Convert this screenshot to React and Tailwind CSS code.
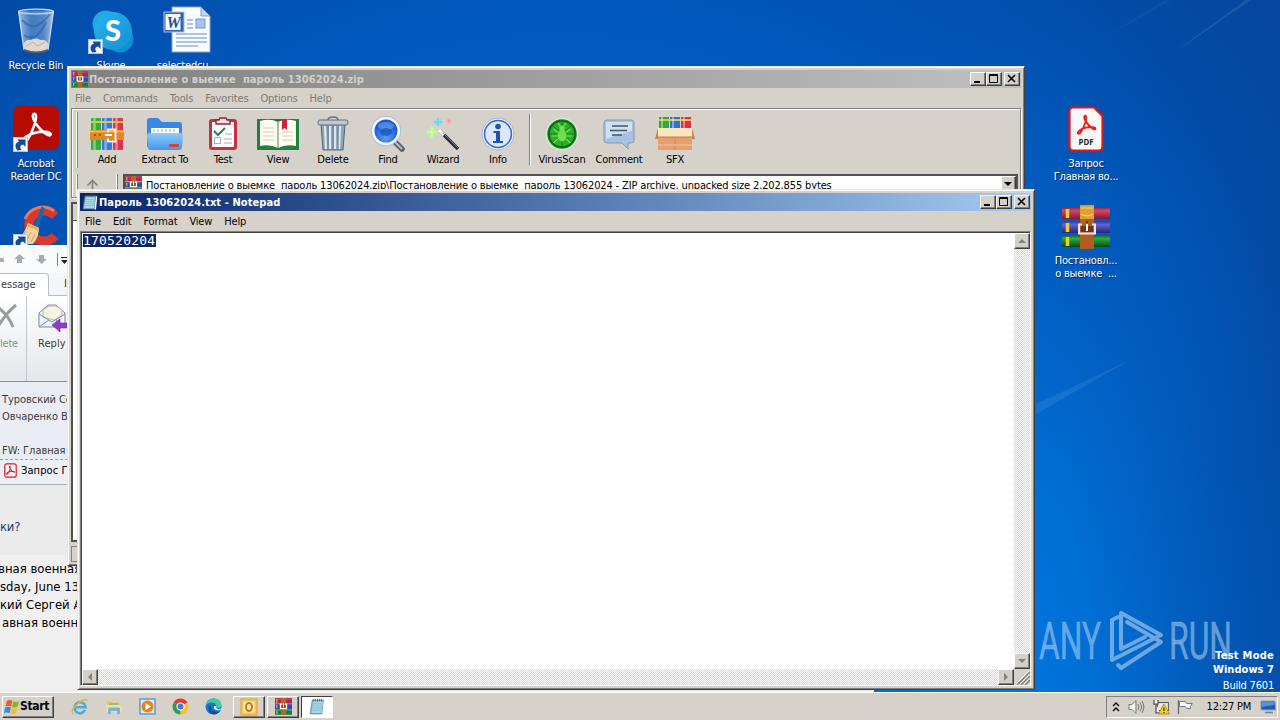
import React from 'react';

// Stack of books with a belt, used at several sizes
const BooksIcon = ({ size = 16, className = '' }) => (
  <svg width={size} height={size} viewBox="0 0 16 16" className={className}>
    <rect x="0" y="0" width="16" height="5" fill="#b5274a" />
    <rect x="0" y="5.3" width="16" height="5" fill="#3a42b8" />
    <rect x="0" y="10.6" width="16" height="5.2" fill="#17803c" />
    <path d="M0 1h16M0 6.4h16M0 11.6h16" stroke="#fff" strokeOpacity=".2" />
    <path d="M1.700 1v3.500M1.700 6.500v3M1.700 12v3" stroke="#e8c53a" strokeWidth="1" />
    <rect x="5.600" y="0" width="4.800" height="16" fill="#b06a24" />
    <path d="M5.200 10.200V5.800h1.500M10.800 10.200V5.800H9.300M5.200 10h5.600" fill="none" stroke="#fff" strokeWidth="1.300" />
    <rect x="6.200" y="6.500" width="3.600" height="2.800" fill="#7b3514" />
    <path d="M8 5v4" stroke="#fff" strokeWidth="1.100" />
  </svg>
);

const NotepadIcon = ({ size = 16 }) => (
  <svg width={size} height={size} viewBox="0 0 16 16">
    <path d="M3 2h11l-1.500 13H1z" fill="#7ab3c8" stroke="#4f8090" strokeWidth=".6" />
    <path d="M3.800 3h9.400l-1.400 11H2.200z" fill="#a9d6e3" />
    <path d="M3.500 5.500h9M3.200 7.500h9M3 9.500h9M2.800 11.500h9" stroke="#82b5c8" strokeWidth=".6" />
    <path d="M4 .8v2.400M6 .8v2.400M8 .8v2.400M10 .8v2.400M12 .8v2.400" stroke="#555" strokeWidth=".8" />
    <path d="M14 2l1.300.6L14 15.400h-1.500z" fill="#fff" />
  </svg>
);

const ShortcutArrow = () => (
  <svg width="15" height="15" viewBox="0 0 15 15" className="absolute bottom-0 left-0">
    <rect x=".5" y=".5" width="14" height="14" fill="#f4f6fa" stroke="#b9c4d4" />
    <path d="M4.500 13.500C1 9.500 2.500 5.500 6 4.800L4.500 2.500h8v7.500L10.500 7.800C8 7 6 9.500 8.500 13z" fill="#164c91" />
  </svg>
);

const RecycleBin = () => (
  <svg width="38" height="46" viewBox="0 0 38 46">
    <defs>
      <linearGradient id="bin" x1="0" x2="1">
        <stop offset="0" stopColor="#c2d5eb" stopOpacity=".85" />
        <stop offset=".35" stopColor="#6f9bd0" stopOpacity=".6" />
        <stop offset=".7" stopColor="#85a9d7" stopOpacity=".6" />
        <stop offset="1" stopColor="#d8e4f2" stopOpacity=".8" />
      </linearGradient>
    </defs>
    <path d="M1.500 3L7 42q12 5 24 0L36.500 3z" fill="url(#bin)" />
    <path d="M6.500 36q3-5 7-4q6-3 10 0q5-1 8 4l-1 5q-11 5-23 0z" fill="#ddd8d0" />
    <path d="M9 38l7-4 5 4 7-4" stroke="#b5b0aa" fill="none" />
    <path d="M5 12q8 8 14 6t14-12M7 27q12 9 22-13" stroke="#2c5eaa" strokeOpacity=".6" strokeWidth="2" fill="none" />
    <path d="M1.500 3L7 42M36.500 3L31 42" stroke="#d5deeb" strokeWidth="1.200" />
    <path d="M7 42q12 5 24 0" stroke="#605d59" strokeWidth="1.600" fill="none" />
    <ellipse cx="19" cy="3.500" rx="17.500" ry="2.300" fill="#5b88c4" fillOpacity=".5" stroke="#d4d9df" strokeWidth="1.200" />
  </svg>
);

const SkypeIcon = () => (
  <svg width="42" height="44" viewBox="0 0 42 44">
    <defs>
      <linearGradient id="skype" x1="0" y1="0" x2="1" y2="1">
        <stop offset="0" stopColor="#25b4ec" />
        <stop offset="1" stopColor="#1490d8" />
      </linearGradient>
    </defs>
    <circle cx="14" cy="14" r="13.500" fill="#25a6e2" />
    <circle cx="28" cy="29" r="13.500" fill="#0c8fd9" />
    <circle cx="21" cy="21" r="19" fill="url(#skype)" />
    <text x="21" y="31" textAnchor="middle" fill="#fff" fontSize="29" fontWeight="900" letterSpacing="0" fontFamily="Lato, sans-serif">S</text>
  </svg>
);

const WordIcon = () => (
  <svg width="49" height="48" viewBox="0 0 49 48">
    <path d="M11 1h27l9 9v36H9V1z" fill="#f8fbff" stroke="#8ea6cc" />
    <path d="M38 1v9h9z" fill="#c5d6ee" stroke="#7d9ccc" />
    <path d="M24 14h6M24 18h6M24 22h6M13 28h31M13 32h31M13 36h31M13 40h22" stroke="#98b0d8" strokeWidth="1.500" />
    <rect x="33" y="13" width="9" height="9" fill="#a9c3e6" stroke="#7397cb" />
    <rect x="1" y="6" width="20" height="20" fill="#3562b5" stroke="#a9bfe7" />
    <rect x="2.500" y="8" width="15" height="16" fill="#f4f8ff" />
    <text x="10.500" y="21.500" textAnchor="middle" fontSize="16" fontWeight="700" fontStyle="italic" fill="#284f9e" letterSpacing="0" fontFamily="Liberation Serif, serif">W</text>
  </svg>
);

// The three-lobed ribbon mark
const Ribbon = ({ stroke, width = 2 }) => (
  <path
    d="M14 2.500C11 3 13.500 12 24 20.500C29 24.500 31 21.500 28 20C21 17.500 9 21 5 25C1 29 5 31 8 26.500C13 19 17 6 15.500 3.500C15.200 2.700 14.800 2.400 14 2.500z"
    fill="none"
    stroke={stroke}
    strokeWidth={width}
    strokeLinejoin="round"
  />
);

const AcrobatIcon = () => (
  <svg width="46" height="46" viewBox="0 0 46 46">
    <rect width="46" height="44" rx="7" fill="#b50b02" />
    <g transform="translate(6 5) scale(1.080)">
      <Ribbon stroke="#fff" width={2.4} />
    </g>
  </svg>
);

const CCleanerIcon = () => (
  <svg width="46" height="46" viewBox="0 0 46 46">
    <path d="M42 13A15 15 0 1 0 42 33" stroke="#d63a2a" strokeWidth="9" fill="none" />
    <path d="M41 8A19 19 0 0 0 12 16" stroke="#ee7660" strokeWidth="3" fill="none" />
    <path d="M29 4l2.500 1.500-7 20-3.500-1.500z" fill="#1d67ad" stroke="#1d67ad" />
    <path d="M15 20l11 5q0 9-6 16H0Q11 33 15 20z" fill="#f3d39a" />
    <path d="M15 20l11 5-1 3-11-5z" fill="#e6b265" />
    <path d="M13 28L6 38M18 29l-5 10M22 31l-4 8" stroke="#d2a05b" />
  </svg>
);

const PdfFileIcon = () => (
  <svg width="36" height="46" viewBox="0 0 36 46">
    <path d="M5 1.500h21l8.500 8.500v31a3.500 3.500 0 0 1-3.500 3.500H5A3.500 3.500 0 0 1 1.500 41V5A3.500 3.500 0 0 1 5 1.500z" fill="#faf9f9" stroke="#d9161c" strokeWidth="2.200" />
    <path d="M26 1l9 9q-3-4-9-9z" fill="#d9161c" stroke="#d9161c" />
    <g transform="translate(7.500 8) scale(.680)">
      <Ribbon stroke="#e8211b" width={2.800} />
    </g>
    <text x="10.500" y="39" fontSize="8.500" fontWeight="700" fill="#222" letterSpacing="0" fontFamily="Open Sans, sans-serif" textLength="15" lengthAdjust="spacingAndGlyphs">PDF</text>
  </svg>
);

const ArchiveIcon = () => (
  <svg width="48" height="44" viewBox="0 0 48 44">
    <defs>
      <linearGradient id="bookR" x1="0" x2="0" y1="0" y2="1"><stop offset="0" stopColor="#88203c" /><stop offset=".3" stopColor="#d04a6c" /><stop offset="1" stopColor="#851731" /></linearGradient>
      <linearGradient id="bookB" x1="0" x2="0" y1="0" y2="1"><stop offset="0" stopColor="#38339a" /><stop offset=".3" stopColor="#6464cf" /><stop offset="1" stopColor="#292379" /></linearGradient>
      <linearGradient id="bookG" x1="0" x2="0" y1="0" y2="1"><stop offset="0" stopColor="#096b1d" /><stop offset=".3" stopColor="#33a83f" /><stop offset="1" stopColor="#064c12" /></linearGradient>
    </defs>
    <rect x="0" y="2" width="48" height="12" rx="1" fill="url(#bookR)" />
    <rect x="0" y="16" width="48" height="12" rx="1" fill="url(#bookB)" />
    <rect x="0" y="30" width="48" height="12" rx="1" fill="url(#bookG)" />
    <path d="M5.500 4v9M5.500 18v9M5.500 32v9" stroke="#f1cf25" strokeWidth="3.500" />
    <rect x="18" y="0" width="14" height="44" fill="#b35b21" />
    <rect x="18" y="0" width="14" height="14" fill="#dda031" />
    <path d="M19 9q6 4 12 0M19 3h12" stroke="#f8d676" fill="none" />
    <circle cx="25" cy="17" r="1" fill="#5c2805" />
    <rect x="19" y="21" width="12" height="6" fill="#703416" />
    <path d="M20 19.500h-3V28.500h16V19.500h-3" fill="none" stroke="#e9e9ed" strokeWidth="2" />
    <path d="M25 19v7" stroke="#fff" strokeWidth="2" />
  </svg>
);

/* ---------- archiver toolbar drawings ---------- */

const AddIcon = () => (
  <svg width="34" height="34" viewBox="0 0 34 34">
    <rect x="1" y="1" width="10" height="32" rx="1" fill="#35ad3d" />
    <rect x="12" y="1" width="10" height="32" rx="1" fill="#3579df" />
    <rect x="23" y="1" width="10" height="32" rx="1" fill="#df3150" />
    <path d="M4.500 1v32M15.500 1v32M26.500 1v32" stroke="#fff" strokeOpacity=".4" strokeWidth="2.500" />
    <path d="M1 5h10M12 5h10M23 5h10" stroke="#d8c940" strokeWidth="2" />
    <rect x="0" y="13" width="34" height="10" rx="1" fill="#df8922" />
    <path d="M0 14.500h34" stroke="#f8c451" strokeWidth="1.500" />
    <path d="M18 15.500v-3h7.500v12H18v-3" fill="none" stroke="#f6efe5" strokeWidth="2" />
    <path d="M15 18h7" stroke="#fff" strokeWidth="2" />
    <circle cx="5" cy="18" r="1" fill="#7e4411" />
    <circle cx="10" cy="18" r="1" fill="#7e4411" />
  </svg>
);

const ExtractIcon = () => (
  <svg width="38" height="34" viewBox="0 0 38 34">
    <defs>
      <linearGradient id="folder" x1="0" x2="0" y1="0" y2="1"><stop offset="0" stopColor="#8fccfa" /><stop offset="1" stopColor="#4596ea" /></linearGradient>
    </defs>
    <path d="M1 30V4q0-3 3-3h8l4 4h17q3 0 3 3v22z" fill="#3a86e6" />
    <path d="M5 11h28v10H5z" fill="#fff" />
    <path d="M8 12v3M12 12v3M16 12v3M20 12v3M24 12v3M28 12v3" stroke="#91abc8" />
    <path d="M1 19q0-3 3-3h30q3 0 3 3l-1 11q0 3-3 3H5q-3 0-3-3z" fill="url(#folder)" />
    <rect x="23" y="27" width="10" height="3" rx="1" fill="#d84134" />
  </svg>
);

const TestIcon = () => (
  <svg width="30" height="34" viewBox="0 0 30 34">
    <rect x="1" y="2" width="28" height="31" rx="3" fill="#c92e43" />
    <rect x="4" y="5" width="22" height="25" fill="#fafafa" />
    <path d="M8 7V3h3l1-2h6l1 2h3v4z" fill="#e4e4e6" stroke="#8a2436" strokeWidth="1.400" />
    <path d="M6 14l4 4 7-7" stroke="#258747" strokeWidth="2" fill="none" />
    <rect x="6.500" y="20.500" width="6" height="6" fill="#fff" stroke="#adb4bc" />
    <path d="M17 17h7M16 22h8M16 26h8" stroke="#aeb3bd" />
  </svg>
);

const ViewIcon = () => (
  <svg width="42" height="34" viewBox="0 0 42 34">
    <path d="M0 2h42v31H0z" fill="#217f42" />
    <path d="M3 4q10-3 18 1 8-4 18-1v25q-10-2-18 2-8-4-18-2z" fill="#fffdf0" />
    <path d="M21 5v26" stroke="#a09c84" strokeWidth="1.500" />
    <path d="M6 11h11M6 15h11M6 19h11M6 23h11M25 19h11M25 23h11M25 15h11" stroke="#cfcdb9" />
    <path d="M25 2h5v11l-2.500-2-2.500 2z" fill="#d32234" />
  </svg>
);

const DeleteIcon = () => (
  <svg width="32" height="36" viewBox="0 0 32 36">
    <path d="M4 8h24l-2 26H6z" fill="#91a5b8" stroke="#516477" />
    <path d="M8 10l1 23M13 10v23M18 10v23M23 10l-1 23" stroke="#dce6ee" strokeWidth="2.200" />
    <path d="M11 10v23M16 10v23M21 10v23" stroke="#61778d" />
    <rect x="1" y="4" width="30" height="5" rx="2" fill="#bdc9d2" stroke="#5f7180" />
    <path d="M11 4q0-3 5-3t5 3" fill="none" stroke="#67727b" strokeWidth="1.500" />
  </svg>
);

const FindIcon = () => (
  <svg width="36" height="36" viewBox="0 0 36 36">
    <defs>
      <radialGradient id="lens" cy=".75"><stop offset="0" stopColor="#5e9df2" /><stop offset="1" stopColor="#1c5cd0" /></radialGradient>
    </defs>
    <path d="M24 25l8 8" stroke="#56616e" strokeWidth="5.500" strokeLinecap="round" />
    <path d="M23 24l9 9" stroke="#b5bdc7" strokeWidth="2" />
    <circle cx="16" cy="15" r="13" fill="url(#lens)" stroke="#f1f6fd" strokeWidth="3" />
    <circle cx="16" cy="15" r="14.800" fill="none" stroke="#99afcc" strokeWidth=".7" />
    <ellipse cx="16" cy="10" rx="8" ry="4" fill="#6fa2ef" fillOpacity=".6" />
    <ellipse cx="16" cy="16" rx="6" ry="4" fill="#1452bc" fillOpacity=".7" />
  </svg>
);

const WizardIcon = () => (
  <svg width="36" height="36" viewBox="0 0 36 36">
    <path d="M15 15l18 18" stroke="#292d35" strokeWidth="3.600" />
    <path d="M14 14l5 5" stroke="#f3f3f3" strokeWidth="3.600" />
    <path d="M18 17l15 15" stroke="#8a8f98" strokeWidth=".8" />
    <circle cx="7" cy="16" r="6" fill="#b8f49b" fillOpacity=".5" />
    <circle cx="7" cy="16" r="3" fill="#b4f77f" />
    <path d="M7 11v10M2 16h10" stroke="#d6ffb8" strokeWidth="1.200" />
    <circle cx="13" cy="6" r="4.500" fill="#87e0f4" fillOpacity=".5" />
    <path d="M13 2v8M9 6h8" stroke="#62d5f0" strokeWidth="1.500" />
    <circle cx="24" cy="5" r="3" fill="#f7b3bc" fillOpacity=".6" />
    <path d="M24 3v4M22 5h4" stroke="#f38e9c" />
  </svg>
);

const InfoIcon = () => (
  <svg width="34" height="34" viewBox="0 0 34 34">
    <circle cx="17" cy="17" r="16" fill="#eef3fc" stroke="#aab7d1" />
    <circle cx="17" cy="17" r="13.500" fill="#dce8fa" stroke="#3267ca" strokeWidth="1.500" />
    <circle cx="17" cy="9.500" r="2.800" fill="#2150b6" />
    <path d="M12.500 14h6.500v10h3v2h-10v-2h3v-8h-2.500z" fill="#2150b6" />
  </svg>
);

const VirusIcon = () => (
  <svg width="34" height="34" viewBox="0 0 34 34">
    <circle cx="17" cy="17" r="15.500" fill="#198c21" stroke="#d9eadb" strokeWidth="1.500" />
    <circle cx="17" cy="17" r="13" fill="#2fae27" stroke="#0a651a" strokeWidth="1.500" />
    <path d="M17 5v24M5 17h24M8 9l18 16M26 9L8 25" stroke="#197f1c" />
    <ellipse cx="17" cy="18.500" rx="4.500" ry="6" fill="#6ee04c" />
    <circle cx="17" cy="11" r="2.600" fill="#6ee04c" />
    <path d="M12.500 15l-4-3M12 19H7M12.500 22l-4 4M21.500 15l4-3M22 19h5M21.500 22l4 4M15 9l-2-3M19 9l2-3" stroke="#78e654" strokeWidth="1.200" />
  </svg>
);

const CommentIcon = () => (
  <svg width="34" height="34" viewBox="0 0 34 34">
    <path d="M5 3h24q3 0 3 3v17q0 3-3 3h-3v6l-6-6H5q-3 0-3-3V6q0-3 3-3z" fill="#a9c1de" stroke="#7d9abb" />
    <path d="M4 5h26v9Q18 17 4 22z" fill="#cfdff0" />
    <path d="M10 9h16M8 13.500h17M10 18h10" stroke="#41566f" strokeWidth="1.600" />
  </svg>
);

const SfxIcon = () => (
  <svg width="40" height="36" viewBox="0 0 40 36">
    <rect x="4" y="1" width="10" height="15" fill="#32a83b" />
    <rect x="15" y="1" width="10" height="15" fill="#2e71da" />
    <rect x="26" y="1" width="10" height="15" fill="#dc3043" />
    <path d="M4 4h10M15 4h10M26 4h10" stroke="#d8c940" strokeWidth="1.800" />
    <path d="M7 1v15M18 1v15M29 1v15" stroke="#fff" strokeOpacity=".4" strokeWidth="2" />
    <path d="M3 13h34v21H3z" fill="#e5a06f" />
    <path d="M3 12h34v9H3z" fill="#fae6bd" />
    <path d="M3 12l-3 11h3zM37 12l3 11h-3z" fill="#c98154" />
    <path d="M20 21v13" stroke="#d48a5a" />
    <path d="M3 29h34" stroke="#f3c6a0" />
    <path d="M3 21h34" stroke="#c47c4c" />
  </svg>
);

const TOOLS = [
  { label: 'Add', icon: AddIcon, width: 'w-[50px]' },
  { label: 'Extract To', icon: ExtractIcon, width: 'w-[66px]' },
  { label: 'Test', icon: TestIcon, width: 'w-[50px]' },
  { label: 'View', icon: ViewIcon, width: 'w-[60px]' },
  { label: 'Delete', icon: DeleteIcon, width: 'w-[50px]' },
  { label: 'Find', icon: FindIcon, width: 'w-[60px]' },
  { label: 'Wizard', icon: WizardIcon, width: 'w-[50px]' },
  { label: 'Info', icon: InfoIcon, width: 'w-[60px]' },
  { separator: true },
  { label: 'VirusScan', icon: VirusIcon, width: 'w-[60px]' },
  { label: 'Comment', icon: CommentIcon, width: 'w-[54px]' },
  { label: 'SFX', icon: SfxIcon, width: 'w-[58px]' },
];

const RAISED = 'border border-t-white border-l-white border-r-[#404040] border-b-[#404040] shadow-[inset_-1px_-1px_0_#808080] bg-[#d4d0c8]';

const CaptionButtons = () => (
  <div className="flex items-center">
    <div className={`w-4 h-[14px] ${RAISED}`}>
      <svg width="14" height="12"><path d="M3 9h6" stroke="#000" strokeWidth="2" /></svg>
    </div>
    <div className={`w-4 h-[14px] ${RAISED}`}>
      <svg width="14" height="12"><path d="M2.500 1.500h8v8h-8zM2 2.500h9" stroke="#000" fill="none" /></svg>
    </div>
    <div className={`ml-0.5 w-4 h-[14px] ${RAISED}`}>
      <svg width="14" height="12"><path d="M3 2l7 7M10 2l-7 7" stroke="#000" strokeWidth="1.600" /></svg>
    </div>
  </div>
);

const ScrollButton = ({ d }) => (
  <div className={`w-4 h-4 shrink-0 ${RAISED}`}>
    <svg width="14" height="14"><path d={d} fill="#808080" /></svg>
  </div>
);

const TRACK = 'bg-[repeating-conic-gradient(#fff_0_25%,#d8d5ce_0_50%)] bg-[length:2px_2px]';

// Desktop shortcut: picture above a centered caption
const DesktopItem = ({ icon, lines, place, shortcut }) => (
  <div className={`absolute flex flex-col items-center w-[76px] ${place}`}>
    <div className="relative">
      {icon}
      {shortcut && <ShortcutArrow />}
    </div>
    <div className="mt-[5px] text-center text-white leading-[13px] whitespace-pre [text-shadow:1px_1px_1px_#002a66]">
      {lines.map((line) => <div key={line}>{line}</div>)}
    </div>
  </div>
);

const MailWindow = () => (
  <div className="absolute left-0 top-[245px] w-[874px] h-[447px] flex flex-col bg-[#efeff0] overflow-hidden text-[#3b3b3b] border-t border-white">
    <div className="h-[27px] shrink-0 bg-[#fafbfc]">
      <svg width="76" height="27">
        <path d="M0 12h3V9l1 7H0zM14 13l5.500-5 5.500 5h-3v4h-5v-4zM36 13h3v-4h5v4h3l-5.500 5z" fill="#a9abad" />
        <path d="M57.500 7v13" stroke="#888" />
        <path d="M61 11.500h6" stroke="#222" />
        <path d="M61 14h7l-3.500 4z" fill="#222" />
      </svg>
    </div>
    <div className="h-[23px] shrink-0 flex bg-[#f4f5f6]">
      <div className="w-[49px] h-6 bg-white border-r border-t border-[#b8bdc4] rounded-tr leading-[22px] tracking-[-0.05px] pl-px">essage</div>
      <div className="flex-1 border-b border-[#b8bdc4] pl-[15px] leading-[22px]">I</div>
    </div>
    <div className="h-[86px] shrink-0 flex bg-linear-to-b from-white to-[#e4e7eb] border-b border-[#8b9098]">
      <div className="w-[27px] border-r border-[#c3c7cd] flex flex-col overflow-hidden">
        <svg width="26" height="41" className="shrink-0"><path d="M-4 10Q8 18 13 31M16 9Q5 18-3 32" stroke="#999b9e" strokeWidth="3" fill="none" /></svg>
        <span className="text-[#8d8d8d] leading-[14px]">lete</span>
      </div>
      <div className="pl-[11px]">
        <svg width="40" height="41" className="block">
          <path d="M1 17L10 9h8l9 8v14H1z" fill="#eef3f9" stroke="#7b8ba3" />
          <path d="M5 14l6-4h7l6 4v6l-8 4-11-3z" fill="#f6f2e4" stroke="#b9b7a7" />
          <path d="M1 18l13 8 13-8M1 31l10-7M27 31l-9-7" stroke="#8291a7" fill="none" />
          <path d="M14 29l8-6v4h12v5H22v4z" fill="#923bc6" stroke="#6d239b" strokeWidth=".6" />
        </svg>
        <span className="block leading-[14px] tracking-[0.05px]">Reply</span>
      </div>
    </div>
    <div className="h-[78px] shrink-0 bg-[#e9edf3] border-b border-dashed border-[#9aa1ab] pl-0.5 pt-[9px] leading-[17px] whitespace-nowrap tracking-[-0.05px]">
      <p>Туровский Сергей</p>
      <p>Овчаренко В.</p>
      <p className="mt-[17px]">FW: Главная военная</p>
    </div>
    <div className="h-[25px] shrink-0 flex items-center pb-1 pl-1 gap-1 bg-[#eceff5] border-b border-[#a9aeb6] text-black whitespace-nowrap tracking-[0.1px]">
      <svg width="13" height="15" viewBox="0 0 13 15">
        <rect x=".8" y=".8" width="11.400" height="13.400" rx="2" fill="#fff" stroke="#d9161c" strokeWidth="1.200" />
        <g transform="translate(1.600 2.500) scale(.300)"><Ribbon stroke="#e8211b" width={3.600} /></g>
      </svg>
      Запрос Главная
    </div>
    <div className="h-[70px] shrink-0 bg-[#ebebec] pt-8 text-[13px] leading-5 text-[#1f3b73]">ки?</div>
    <div className="bg-[#f0f0f1] pt-[5px] text-[13px] leading-[18px] text-black whitespace-nowrap tracking-[0px]">
      <p className="-ml-0.5">вная военная</p>
      <p>sday, June 13,</p>
      <p>кий Сергей А</p>
      <p className="pl-0.5">авная военная</p>
    </div>
  </div>
);

const ArchiverWindow = () => (
  <div className="absolute left-[67px] top-[66px] w-[958px] h-[500px] p-[3px] flex flex-col bg-[#d6d1c9] border border-t-[#e8e5df] border-l-[#e8e5df] border-r-[#404040] border-b-[#404040] shadow-[inset_1px_1px_0_#fff,inset_-1px_-1px_0_#808080]">
    <div className="h-[18px] shrink-0 flex items-center pl-px pr-px bg-linear-to-r from-[#808080] to-[#c0c0c0]">
      <BooksIcon size={16} />
      <span className="flex-1 ml-px font-bold text-[#d4d0c8] whitespace-pre tracking-[0.09px]">Постановление о выемке  пароль 13062024.zip</span>
      <CaptionButtons />
    </div>
    <div className="h-5 shrink-0 flex items-center pl-1 gap-3 text-[#7d7a76] tracking-[-0.15px]">
      {['File', 'Commands', 'Tools', 'Favorites', 'Options', 'Help'].map((item) => <span key={item}>{item}</span>)}
    </div>
    <div className="h-[90px] shrink-0 border border-[#808080] shadow-[inset_1px_1px_0_#fff,1px_1px_0_#fff] flex flex-col">
      <div className="h-[62px] flex pt-[3px]">
        <div className="ml-1 mr-1 w-[2px] h-[56px] border-l border-white border-r border-r-[#808080]" />
        {TOOLS.map((tool, i) => tool.separator ? (
          <div key={i} className="mx-px mt-0.5 w-[2px] h-[51px] border-l border-[#808080] border-r border-r-white" />
        ) : (
          <div key={i} className={`flex flex-col items-center text-black ${tool.width}`}>
            <div className="h-[41px] pt-0.5 flex items-center"><tool.icon /></div>
            <span className="leading-[13px] whitespace-nowrap tracking-[-0.2px]">{tool.label}</span>
          </div>
        ))}
      </div>
      <div className="flex-1 flex pt-[3px]">
        <div className="ml-1 w-[2px] border-l border-white border-r border-r-[#808080]" />
        <svg width="38" height="22"><path d="M14.500 17V7M9.500 11.500l5-5 5 5" stroke="#85827d" strokeWidth="1.700" fill="none" /></svg>
        <div className="w-[2px] border-l border-white border-r border-r-[#808080]" />
        <div className="ml-[5px] mr-0.5 flex-1 flex bg-white border-2 border-b-0 border-[#505050] overflow-hidden">
          <BooksIcon size={17} />
          <span className="flex-1 ml-1 pt-px leading-[17px] text-black whitespace-pre tracking-[-0.145px]">Постановление о выемке  пароль 13062024.zip\Постановление о выемке  пароль 13062024 - ZIP archive, unpacked size 2,202,855 bytes</span>
          <div className={`w-[15px] h-4 ${RAISED}`}>
            <svg width="13" height="13"><path d="M2 5h8l-4 4z" fill="#000" /></svg>
          </div>
        </div>
      </div>
    </div>
    <div className="flex-1 mt-1 bg-white border-2 border-[#505050]">
      <div className="h-[17px] bg-[#d6d1c9] border-b border-[#555]" />
    </div>
    <div className="h-5 shrink-0 pt-1">
      <div className="h-4 border border-[#808080]" />
    </div>
  </div>
);

const NotepadWindow = () => (
  <div className="absolute left-[77px] top-[189px] w-[958px] h-[501px] p-[3px] pl-0.5 flex flex-col bg-[#d6d1c9] border border-t-[#e8e5df] border-l-[#e8e5df] border-r-[#404040] border-b-[#404040] shadow-[inset_1px_1px_0_#fff,inset_-1px_-1px_0_#808080]">
    <div className="h-[18px] shrink-0 flex items-center pl-0.5 pr-px bg-linear-to-r from-[#0a246a] to-[#a6caf0]">
      <NotepadIcon />
      <span className="flex-1 ml-px font-bold text-white whitespace-nowrap tracking-[0.09px]">Пароль 13062024.txt - Notepad</span>
      <CaptionButtons />
    </div>
    <div className="h-5 shrink-0 flex items-center pl-[5px] gap-3 text-black tracking-[-0.15px]">
      {['File', 'Edit', 'Format', 'View', 'Help'].map((item) => <span key={item}>{item}</span>)}
    </div>
    <div className="flex-1 flex flex-col border border-t-[#808080] border-l-[#808080] border-r-white border-b-white">
      <div className="flex-1 flex border-t border-l border-[#404040]">
        <div className="flex-1 bg-white">
          <span className="inline-block align-top ml-px mt-px h-[13px] w-[73px] bg-[#0a246a] text-white text-[13px] leading-[13px] tracking-[0.2px] font-['DejaVu_Sans_Mono',monospace]">170520204</span>
        </div>
        <div className={`w-4 flex flex-col justify-between ${TRACK}`}>
          <ScrollButton d="M3 9h8l-4-4z" />
          <ScrollButton d="M3 5h8l-4 4z" />
        </div>
      </div>
      <div className="h-4 shrink-0 flex border-l border-[#404040]">
        <div className={`flex-1 flex justify-between ${TRACK}`}>
          <ScrollButton d="M9 3v8l-4-4z" />
          <ScrollButton d="M5 3v8l4-4z" />
        </div>
        <svg width="16" height="16">
          <path d="M3 16L16 3M7 16l9-9M11 16l5-5" stroke="#808080" strokeWidth="1.500" />
          <path d="M2 15L15 2M6 15l9-9M10 15l5-5" stroke="#fff" />
        </svg>
      </div>
    </div>
  </div>
);

/* ---------- taskbar ---------- */

const StartFlag = () => (
  <svg width="16" height="16" viewBox="0 0 17 17">
    <path d="M3 2q3-2 6 0L7.500 8q-3-1.500-6 0z" fill="#ea5a25" />
    <path d="M10 2.500q3 1.500 6 0L14.500 8q-3 2-6 .4z" fill="#7db72f" />
    <path d="M1.300 9q3-1.600 6 0L6 15q-3-1.500-6 0z" fill="#3a8bd8" />
    <path d="M8.300 9.500q3 1.500 6 0L13 15q-3 1.600-6 .3z" fill="#f5bd27" />
  </svg>
);

const IeIcon = () => (
  <svg width="18" height="18" viewBox="0 0 18 18">
    <path d="M14 12A5.500 5.500 0 1 1 14.500 9.300H5" fill="none" stroke="#45aee4" strokeWidth="2.600" />
    <path d="M2 16Q-1 12 7 5.500T16.500 3" fill="none" stroke="#e5b53a" strokeWidth="1.300" />
  </svg>
);

const ExplorerIcon = () => (
  <svg width="18" height="18" viewBox="0 0 18 18">
    <path d="M2 3h5l1 1.500h7V14H2z" fill="#e5c66c" />
    <path d="M4 5h9v3H4z" fill="#8ac77f" />
    <path d="M1 7h16v7H1z" fill="#f4df98" />
    <path d="M3 16v-5q0-1.500 1.500-1.500h9Q15 9.500 15 11v5h-3v-3H6v3z" fill="#78b5dc" />
  </svg>
);

const MediaIcon = () => (
  <svg width="17" height="17" viewBox="0 0 17 17">
    <rect x="1" y="1" width="15" height="15" fill="#dbeaf7" stroke="#4f91cc" strokeWidth="1.300" />
    <circle cx="8.500" cy="8.500" r="6" fill="#ef7f19" />
    <path d="M6.500 5l5.500 3.500L6.500 12z" fill="#fff" />
  </svg>
);

const ChromeIcon = () => (
  <svg width="17" height="17" viewBox="0 0 17 17">
    <path d="M8.500 8.500L1.600 4.500A8 8 0 0 1 15.400 4.500z" fill="#df3b2e" />
    <path d="M8.500 8.500L1.600 4.500A8 8 0 0 0 8.500 16.500z" fill="#2c9e4b" />
    <path d="M8.500 8.500L15.400 4.500A8 8 0 0 1 8.500 16.500z" fill="#f6c529" />
    <circle cx="8.500" cy="8.500" r="4" fill="#fff" />
    <circle cx="8.500" cy="8.500" r="3" fill="#3f7ce8" />
  </svg>
);

const EdgeIcon = () => (
  <svg width="17" height="17" viewBox="0 0 17 17">
    <circle cx="8.500" cy="8.500" r="8" fill="#1577cb" />
    <path d="M.6 8Q2 .5 9 .5q7.500.5 7.500 6.500 0 3-3.500 3-2.500 0-2-2.500Q10.500 4 6 4.500 2 5 .6 8z" fill="#3fc9a5" />
    <path d="M6 7q-1 5 4 6.500 3 .7 5.500-1-3 4-7 4Q3 15 3.500 10 4 8 6 7z" fill="#10509f" />
    <path d="M9 8q-1 3 2.500 4t5-1.500V10q-1 1.500-4 1-2-.8-1.500-3z" fill="#e9f7fb" />
  </svg>
);

const OutlookIcon = () => (
  <svg width="18" height="18" viewBox="0 0 18 18">
    <rect x="1" y="1" width="16" height="16" fill="#f3c75a" stroke="#d8a13d" />
    <rect x="3.500" y="3.500" width="11" height="11" fill="#fbe7a8" />
    <ellipse cx="9" cy="9" rx="3" ry="4" fill="none" stroke="#b87d18" strokeWidth="1.900" />
  </svg>
);

const Taskbar = () => (
  <div className="absolute left-0 bottom-0 w-full h-7 flex items-center bg-[#d6d1c9] border-t border-white text-black">
    <div className={`ml-0.5 w-[52px] h-[22px] flex items-center pl-px ${RAISED}`}>
      <StartFlag />
      <span className="font-bold text-[12px] tracking-[-0.3px]">Start</span>
    </div>
    <div className="ml-[17px] flex items-center gap-4">
      <IeIcon />
      <ExplorerIcon />
      <MediaIcon />
      <ChromeIcon />
      <EdgeIcon />
    </div>
    <div className="ml-[11px] flex gap-[2px]">
      <div className={`w-8 h-[22px] flex items-center justify-center ${RAISED}`}><OutlookIcon /></div>
      <div className={`w-8 h-[22px] flex items-center justify-center ${RAISED}`}><BooksIcon size={17} /></div>
      <div className="w-8 h-[22px] flex items-center justify-center bg-white border border-t-[#404040] border-l-[#404040] border-r-white border-b-white"><NotepadIcon size={17} /></div>
    </div>
    <div className="ml-auto mr-0.5 w-[172px] h-[22px] flex items-center pl-[5px] border border-t-[#808080] border-l-[#808080] border-r-white border-b-white">
      <svg width="8" height="12"><path d="M1 5l3-3 3 3M1 10l3-3 3 3" stroke="#000" strokeWidth="1.400" fill="none" /></svg>
      <svg width="17" height="16" viewBox="0 0 17 16" className="ml-2">
        <path d="M1 5.500h3l4-4v13l-4-4H1z" fill="#f5f5f5" stroke="#777" />
        <path d="M10 5q2 3 0 6M12 3.500q3.500 4.500 0 9M14 2q4 6 0 12" stroke="#777" fill="none" />
      </svg>
      <svg width="17" height="16" viewBox="0 0 17 16" className="ml-2">
        <rect x="4.500" y="3.500" width="11" height="8" fill="#e7e7e7" stroke="#555" />
        <path d="M1 1v4h4V1M3 5v9h4" stroke="#555" strokeWidth="1.300" fill="#fff" />
        <path d="M11 5l5.500 10h-11z" fill="#f6d321" stroke="#b98b13" />
        <path d="M11 8.500v3.500M11 13v1" stroke="#222" strokeWidth="1.200" />
      </svg>
      <svg width="17" height="16" viewBox="0 0 17 16" className="ml-[7px]">
        <path d="M1.500 1v14" stroke="#666" strokeWidth="1.300" />
        <path d="M2.500 2.500h6l1 2h6l-2 3v2h-4l-1-2h-6z" fill="#fafafa" stroke="#777" />
      </svg>
      <span className="ml-[13px] whitespace-nowrap tracking-[-0.2px]">12:27 PM</span>
      <svg width="17" height="14" viewBox="0 0 17 14" className="ml-[9px]">
        <path d="M1 1h14l1 9H1z" fill="#2459aa" stroke="#8ba4ca" />
        <path d="M2 2h12v3L2 7z" fill="#5b91d7" />
        <path d="M5 12.500h8" stroke="#697f9c" strokeWidth="1.500" />
      </svg>
    </div>
  </div>
);

const Watermark = () => (
  <svg width="200" height="70" viewBox="0 0 200 70" className="absolute left-[1037px] top-[607px]">
    <g fill="#c4dcf5" fillOpacity=".5" stroke="#c4dcf5" strokeOpacity=".25" strokeWidth="1" letterSpacing="0" fontFamily="Roboto, sans-serif" fontSize="52">
      <text x="2" y="52" textLength="62" lengthAdjust="spacingAndGlyphs">ANY</text>
      <text x="132" y="52" textLength="63" lengthAdjust="spacingAndGlyphs">RUN</text>
    </g>
    <path
      d="M84 42V6L124 28M90 15L124 35L84 61L81 58M81 10L75 13V53L124 28M84 42L108 30"
      fill="none"
      stroke="#c4dcf5"
      strokeOpacity=".55"
      strokeWidth="4"
      strokeLinejoin="round"
      strokeLinecap="round"
    />
  </svg>
);

export default function App() {
  return (
    <div className="relative w-[1280px] h-[720px] overflow-hidden select-none bg-[#0347a0] bg-[radial-gradient(ellipse_360px_640px_at_990px_660px,#0079e4_0%,#0074dcd9_30%,#0068cc80_65%,#0060c000_100%),radial-gradient(ellipse_800px_460px_at_560px_230px,#0066d4_0%,#0060caa6_50%,#0056b800_100%)] text-[11px] leading-[13px] tracking-[-0.2px] font-['DejaVu_Sans_Condensed','DejaVu_Sans',sans-serif]">
      {/* light streaks of the wallpaper */}
      <svg width="1280" height="720" className="absolute inset-0">
        <path d="M1180 48L1246 0h5L1184 46z" fill="#fff" fillOpacity=".09" />
        <path d="M1100 40L1165 0h6z" fill="#fff" fillOpacity=".04" />
        <path d="M1036 414L1130 360l-94 44z" fill="#fff" fillOpacity=".08" />
      </svg>

      <DesktopItem place="left-[-2px] top-[8px]" icon={<RecycleBin />} lines={['Recycle Bin']} />
      <DesktopItem place="left-[73px] top-[10px]" icon={<div className="pl-1"><SkypeIcon /></div>} lines={['Skype']} shortcut />
      <DesktopItem place="left-[149px] top-[6px]" icon={<WordIcon />} lines={['selectedcu...']} />
      <DesktopItem place="left-[-2px] top-[106px]" icon={<AcrobatIcon />} lines={['Acrobat', 'Reader DC']} shortcut />
      <DesktopItem place="left-[-2px] top-[203px]" icon={<CCleanerIcon />} lines={['CCleaner']} shortcut />
      <DesktopItem place="left-[1048px] top-[106px]" icon={<PdfFileIcon />} lines={['Запрос', 'Главная во...']} />
      <DesktopItem place="left-[1048px] top-[205px]" icon={<ArchiveIcon />} lines={['Постановл...', 'о выемке  ...']} />

      <MailWindow />
      <ArchiverWindow />
      <NotepadWindow />

      <Watermark />
      <div className="absolute right-[6px] top-[649px] text-right text-white leading-[14px]">
        <p className="font-bold tracking-[0.25px]">Test Mode</p>
        <p className="font-bold tracking-[0.05px]">Windows 7</p>
        <p className="mt-0.5">Build 7601</p>
      </div>

      <Taskbar />
    </div>
  );
}
